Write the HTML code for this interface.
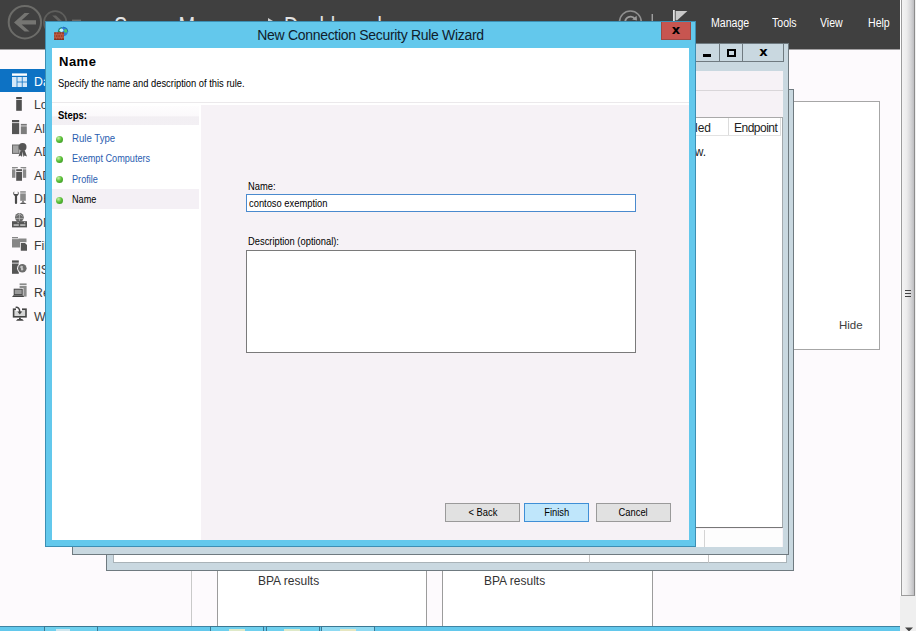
<!DOCTYPE html>
<html lang="en">
<head>
<meta charset="utf-8">
<title>New Connection Security Rule Wizard</title>
<style>
*{box-sizing:border-box;margin:0;padding:0}
html,body{width:916px;height:631px;overflow:hidden;background:#fdfafd;font-family:"Liberation Sans",sans-serif;color:#000}
.abs{position:absolute}
#stage{position:relative;width:916px;height:631px;overflow:hidden;background:#fdfafd}
/* Server Manager header */
#smhead{left:0;top:0;width:900px;height:49px;background:#404040;overflow:hidden}
.smt{font-size:28px;line-height:28px;color:#e2e2e2;white-space:nowrap;transform:translateY(0.6px) scaleX(0.715);transform-origin:0 50%}
.menu{top:16px;font-size:12px;line-height:14px;color:#fff;white-space:nowrap;transform:scaleX(0.88);transform-origin:0 50%}
/* sidebar */
.navrow{left:0;width:60px;height:23px;font-size:12.3px;line-height:23px;color:#3a3a3a;white-space:nowrap}
.navrow span{position:absolute;left:34px;top:2px;transform:translateY(0.3px)}
.navsel{background:#0d72c4;color:#fff}
/* windows */
.frame{background:#c9d8e0;border:1px solid #6f7a80}
.tile{background:#fff}
.vline{width:1px;background:#b4b4b4}
.bpa{font-size:12px;line-height:14px;color:#333;white-space:nowrap}
/* dialog */
#dlg{left:45px;top:21px;width:651px;height:526px;background:#63c8ec;border:1px solid #3c8fb4}
#dlgtitle{left:0;top:4px;width:649px;text-align:center;font-size:14px;line-height:18px;color:#10202c;white-space:nowrap;letter-spacing:-0.31px}
#dlgclose{left:615px;top:0;width:30px;height:18px;background:#c75550;border:1px solid #9c4a46;border-top:0;color:#000;text-align:center;font-family:'DejaVu Sans',sans-serif;font-size:13px;font-weight:bold;line-height:16px}
#inner{left:6px;top:26px;width:637px;height:492px;background:#fff;overflow:hidden}
.sx{display:inline-block;transform-origin:0 50%;white-space:nowrap}
.t11{font-size:11px;line-height:13px;white-space:nowrap}
.step{left:20px;color:#2a5db0}
.dot{left:3.5px;margin-top:0.5px;width:7.4px;height:7.4px;border-radius:50%;background:radial-gradient(circle at 35% 30%,#c9f0a8 0%,#5cc03a 45%,#2f8a1c 100%)}
.btn{top:455px;height:19px;border:1px solid #9a9a9a;background:#e1e1e1;text-align:center;font-size:11px;line-height:17px}
</style>
</head>
<body>
<div id="stage">

<!-- Server Manager header -->
<div id="smhead" class="abs">
  <svg class="abs" style="left:0;top:0" width="110" height="49" viewBox="0 0 110 49">
    <circle cx="24.9" cy="22.2" r="16.2" fill="none" stroke="#6c6c69" stroke-width="2"/>
    <path d="M14 22.4 L24.6 13 H29.6 L21.6 20.2 H36 V24.6 H21.6 L29.6 31.6 H24.6 Z" fill="#757572"/>
    <circle cx="55.2" cy="22.5" r="11.3" fill="none" stroke="#5e5e5c" stroke-width="1.7"/>
    <path d="M63.5 22.5 L56 15.6 H52.2 L58 20.9 H47 V24.1 H58 L52.2 29.4 H56 Z" fill="#636361"/>
    <rect x="72" y="19.6" width="9" height="2" fill="#6a6a68"/>
  </svg>
  <div class="abs smt" style="left:114px;top:12px">Server Manager</div>
  <div class="abs" style="left:268px;top:18px;width:0;height:0;border-left:5px solid #cfcfcf;border-top:3.5px solid transparent;border-bottom:3.5px solid transparent"></div>
  <div class="abs smt" style="left:284px;top:12px">Dashboard</div>
  <svg class="abs" style="left:600px;top:0" width="120" height="49" viewBox="0 0 120 49">
    <circle cx="30.4" cy="22" r="10.9" fill="none" stroke="#8f8f8f" stroke-width="1.5"/>
    <path d="M25.2 21.5 A5.4 5.4 0 0 1 35 19" fill="none" stroke="#9a9a9a" stroke-width="1.9"/>
    <path d="M32.2 19.6 L37 20.6 L36.6 15.8 Z" fill="#9a9a9a"/>
    <rect x="51.6" y="14" width="1.3" height="9" fill="#a8a8a8"/>
    <rect x="73" y="10" width="1.8" height="14" fill="#e0e0e0"/>
    <path d="M75.6 11 H87.4 L77.2 20.2 H75.6 Z" fill="#c9c9c9"/>
  </svg>
  <div class="abs menu" style="left:711px">Manage</div>
  <div class="abs menu" style="left:772px">Tools</div>
  <div class="abs menu" style="left:820px">View</div>
  <div class="abs menu" style="left:868px">Help</div>
</div>
<div class="abs" style="left:0;top:49px;width:900px;height:1px;background:#a3a1a3"></div>

<!-- right scrollbar -->
<div class="abs" style="left:900px;top:0;width:16px;height:631px;background:#efefef"></div>
<div class="abs" style="left:900px;top:0;width:1px;height:596px;background:#fff"></div>
<div class="abs" style="left:901px;top:0;width:14px;height:596px;background:linear-gradient(90deg,#f4f4f4 0%,#ececec 40%,#d4d4d6 75%,#bdbdc0 100%);border-left:1px solid #9c9c9c;border-right:1px solid #8c8c8c;border-bottom:1px solid #9c9c9c"></div>
<div class="abs" style="left:905px;top:290px;width:6px;height:1px;background:#444"></div>
<div class="abs" style="left:905px;top:293px;width:6px;height:1px;background:#444"></div>
<div class="abs" style="left:905px;top:296px;width:6px;height:1px;background:#444"></div>
<svg class="abs" style="left:904px;top:627px" width="10" height="4" viewBox="0 0 10 4"><path d="M1 0.5 H9 L5 4.5 Z" fill="#444"/></svg>

<!-- sidebar -->
<div class="abs navrow navsel" style="top:69px"><span>Dashboard</span></div>
<div class="abs navrow" style="top:92px"><span>Local Server</span></div>
<div class="abs navrow" style="top:116px"><span>All Servers</span></div>
<div class="abs navrow" style="top:139px"><span>AD CS</span></div>
<div class="abs navrow" style="top:163px"><span>AD DS</span></div>
<div class="abs navrow" style="top:186px"><span>DHCP</span></div>
<div class="abs navrow" style="top:210px"><span>DNS</span></div>
<div class="abs navrow" style="top:233px"><span>File and Storage Services</span></div>
<div class="abs navrow" style="top:257px"><span>IIS</span></div>
<div class="abs navrow" style="top:280px"><span>Remote Access</span></div>
<div class="abs navrow" style="top:304px"><span>WSUS</span></div>
<svg class="abs" style="left:0;top:60px" width="45" height="280" viewBox="0 60 45 280">
<!-- dashboard -->
<rect x="12" y="73.4" width="15" height="2.4" fill="#fff"/>
<rect x="12" y="77" width="4.6" height="10" fill="#d4e8f9"/>
<rect x="17.4" y="77" width="4.4" height="4.6" fill="#d4e8f9"/><rect x="22.6" y="77" width="4.4" height="4.6" fill="#d4e8f9"/>
<rect x="17.4" y="82.4" width="4.4" height="4.6" fill="#d4e8f9"/><rect x="22.6" y="82.4" width="4.4" height="4.6" fill="#d4e8f9"/>
<!-- local server -->
<rect x="16.2" y="97" width="5.6" height="2" fill="#4a4a4a"/><rect x="16.2" y="99.8" width="5.6" height="11" fill="#4f4f4f"/>
<!-- all servers -->
<rect x="12" y="120" width="7.2" height="2.3" fill="#505050"/><rect x="12" y="123.1" width="7.2" height="11" fill="#555"/>
<rect x="20.8" y="123.9" width="6" height="1.7" fill="#777"/><rect x="20.8" y="126.3" width="6" height="7.8" fill="#7d7d7d"/>
<!-- AD CS -->
<rect x="12.5" y="145" width="6.5" height="8.4" fill="#a4a4a4" stroke="#6a6a6a" stroke-width="1"/>
<path d="M20.6 150.5 L18.4 156.6 L20.8 155.4 L22 157 L22.7 151.5 L23.4 157 L24.6 155.4 L27 156.6 L24.8 150.5 Z" fill="#555"/>
<circle cx="22.6" cy="147" r="3.9" fill="#555"/>
<!-- AD DS -->
<rect x="12" y="167" width="5.8" height="1.5" fill="#8a8a8a"/><rect x="12" y="169.3" width="5.8" height="8.5" fill="#8a8a8a"/>
<rect x="20.6" y="167" width="5.6" height="1.5" fill="#8a8a8a"/><rect x="20.6" y="169.3" width="5.6" height="8.5" fill="#8a8a8a"/>
<rect x="15.4" y="168.4" width="7.4" height="13" fill="#fdfafd"/>
<rect x="16.2" y="169.2" width="5.8" height="2" fill="#555"/><rect x="16.2" y="172" width="5.8" height="8.8" fill="#555"/>
<!-- DHCP -->
<path d="M14.2 191.2 A2.9 2.9 0 0 0 14.9 196 V203 A1.1 1.1 0 0 0 17.1 203 V196 A2.9 2.9 0 0 0 17.8 191.2 V194 H14.2 Z" fill="#4a4a4a"/>
<rect x="20.2" y="191.2" width="5.6" height="1.5" fill="#8a8a8a"/><rect x="20.2" y="193.4" width="5.6" height="7.4" fill="#8a8a8a"/>
<rect x="22.3" y="200.8" width="1.4" height="1.8" fill="#555"/><path d="M19.6 204 L21.6 202.5 H24.4 L26.6 204 Z" fill="#555"/>
<!-- DNS -->
<circle cx="19.4" cy="217.3" r="4.4" fill="#6a6a6a"/>
<path d="M16.2 216.5 Q19.4 212 22.6 216.5 M19.4 213 V221 M15.2 218.4 H23.6" stroke="#b8b8b8" stroke-width="0.8" fill="none"/>
<rect x="12" y="221.2" width="15" height="6.2" fill="#555"/>
<rect x="13.6" y="224.3" width="5.2" height="1.5" fill="#c8c8c8"/><rect x="20.2" y="224.3" width="5.2" height="1.5" fill="#c8c8c8"/>
<rect x="17.6" y="222.2" width="1" height="1" fill="#ddd"/><rect x="24.2" y="222.2" width="1" height="1" fill="#ddd"/>
<!-- File -->
<path d="M12 237 H18 V238.6 H26.5 V247.6 H12 Z" fill="#868686"/>
<rect x="12" y="238.4" width="6.5" height="0.7" fill="#fdfafd"/>
<rect x="20" y="242.2" width="7.8" height="9.4" fill="#fdfafd"/>
<path d="M20.8 243 H25 L27 245 V250.8 H20.8 Z" fill="#555"/>
<!-- IIS -->
<rect x="12" y="260.4" width="6.8" height="2.3" fill="#505050"/><rect x="12" y="263.5" width="6.8" height="10.3" fill="#555"/>
<circle cx="22.3" cy="268.3" r="5.2" fill="#fdfafd"/><circle cx="22.3" cy="268.3" r="4.3" fill="#6c6c6c"/>
<path d="M20 267 Q21.5 265 23 266.5 Q22 268 23.5 269 Q22.5 271.5 21 270 Q21.5 268.5 20 267 Z" fill="#c4c4c4"/>
<!-- Remote Access -->
<rect x="19.6" y="283.4" width="7" height="1.8" fill="#8a8a8a"/><rect x="19.6" y="286" width="7" height="10.6" fill="#8c8c8c"/>
<rect x="13" y="288" width="10.4" height="8" fill="#fdfafd"/>
<rect x="14.2" y="289.2" width="8" height="5.4" fill="#9a9a9a" stroke="#444" stroke-width="1"/>
<path d="M12 297 L13.4 295.3 H23 L24.2 297 Z" fill="#444"/>
<!-- WSUS -->
<rect x="13.6" y="309.2" width="12.4" height="7.6" fill="#d6d6d6" stroke="#444" stroke-width="1.6"/>
<rect x="16" y="307" width="6" height="4" fill="#fdfafd"/>
<path d="M15.6 307.4 Q19.6 307 19.8 312" stroke="#444" stroke-width="1.5" fill="none"/>
<path d="M17.4 311.6 H22.2 L19.8 314.6 Z" fill="#444"/>
<rect x="19" y="317.6" width="1.8" height="1.6" fill="#444"/><path d="M16 320.7 L17.6 319 H22.2 L23.8 320.7 Z" fill="#444"/>
</svg>

<!-- dashboard tiles behind -->
<div class="abs vline" style="left:191px;top:560px;height:66px;background:#c9c9c9"></div>
<div class="abs tile" style="left:217px;top:560px;width:210px;height:66px;border-left:1px solid #9c9c9c;border-right:1px solid #9c9c9c"></div>
<div class="abs tile" style="left:442px;top:560px;width:211px;height:66px;border-left:1px solid #9c9c9c;border-right:1px solid #9c9c9c"></div>
<div class="abs bpa" style="left:258px;top:574px">BPA results</div>
<div class="abs bpa" style="left:484px;top:574px">BPA results</div>
<!-- right white panel with Hide -->
<div class="abs tile" style="left:790px;top:101px;width:90px;height:249px;border:1px solid #a6a6a6"></div>
<div class="abs" style="left:839px;top:318px;font-size:11.5px;line-height:14px;color:#404040">Hide</div>

<!-- third window (rear) -->
<div class="abs frame" style="left:106px;top:89px;width:688px;height:482px"></div>
<div class="abs" style="left:113px;top:555px;width:674px;height:8px;background:#fff;border:1px solid #a9b3b8;border-top:0"></div>
<div class="abs" style="left:589px;top:555px;width:1px;height:8px;background:#c4c4c4"></div>
<div class="abs" style="left:708px;top:555px;width:1px;height:8px;background:#c4c4c4"></div>

<!-- second window (MMC) -->
<div class="abs frame" style="left:72px;top:43px;width:717px;height:512px"></div>
<div class="abs" style="left:696px;top:44px;width:24px;height:18px;border-right:1px solid #6f7a80;border-bottom:1px solid #6f7a80"></div>
<div class="abs" style="left:720px;top:44px;width:23px;height:18px;border-right:1px solid #6f7a80;border-bottom:1px solid #6f7a80"></div>
<div class="abs" style="left:743px;top:44px;width:41px;height:18px;border-right:1px solid #6f7a80;border-bottom:1px solid #6f7a80"></div>
<div class="abs" style="left:703px;top:54px;width:8px;height:3px;background:#000"></div>
<div class="abs" style="left:727px;top:49px;width:9px;height:8px;border:2px solid #000"></div>
<div class="abs" style="left:743px;top:44px;width:41px;height:18px;text-align:center;font-family:'DejaVu Sans',sans-serif;font-size:13px;font-weight:bold;line-height:16px;color:#000">x</div>
<div class="abs" style="left:80px;top:71px;width:703px;height:476px;background:#f6f2f6"></div>
<div class="abs" style="left:80px;top:90px;width:703px;height:1px;background:#d9d6d9"></div>
<!-- list header & list -->
<div class="abs" style="left:600px;top:117px;width:183px;height:411px;background:#fff;border-bottom:1px solid #777;border-top:1px solid #a9a9a9;border-right:1px solid #a3a9ad"></div>
<div class="abs" style="left:600px;top:118px;width:181px;height:18px;border-bottom:1px solid #e2e2e2"></div>
<div class="abs" style="left:728px;top:118px;width:1px;height:17px;background:#dcdcdc"></div>
<div class="abs" style="left:780px;top:118px;width:1px;height:17px;background:#dcdcdc"></div>
<div class="abs" style="left:611px;top:121px;width:100px;text-align:right;font-size:12px;line-height:14px;color:#222;white-space:nowrap">Enabled</div>
<div class="abs" style="left:734px;top:121px;font-size:12px;line-height:14px;color:#222;white-space:nowrap;letter-spacing:-0.5px">Endpoint</div>
<div class="abs" style="left:406px;top:145px;width:300px;text-align:right;font-size:12px;line-height:14px;color:#222;white-space:nowrap">There are no items to show in this view.</div>
<div class="abs" style="left:600px;top:529px;width:182px;height:18px;background:#fdfdfd"></div>
<div class="abs" style="left:704px;top:530px;width:1px;height:17px;background:#d4d4d4"></div>

<!-- taskbar -->
<div class="abs" style="left:0;top:626px;width:900px;height:5px;background:#63c8ec;border-top:1px solid #3f84a4"></div>
<div class="abs" style="left:44px;top:626px;width:54px;height:5px;background:#6fd0ee;border:1px solid #3b7893;border-bottom:0"></div>
<div class="abs" style="left:210px;top:626px;width:54px;height:5px;background:#6fd0ee;border:1px solid #3b7893;border-bottom:0"></div>
<div class="abs" style="left:266px;top:626px;width:54px;height:5px;background:#6fd0ee;border:1px solid #3b7893;border-bottom:0"></div>
<div class="abs" style="left:321px;top:626px;width:54px;height:5px;background:#8fdaf2;border:1px solid #3b7893;border-bottom:0"></div>
<div class="abs" style="left:56px;top:629px;width:14px;height:2px;background:#cfe6ee"></div>
<div class="abs" style="left:229px;top:629px;width:16px;height:2px;background:#dfe9c8"></div>
<div class="abs" style="left:284px;top:629px;width:16px;height:2px;background:#dfe9c8"></div>
<div class="abs" style="left:340px;top:629px;width:16px;height:2px;background:#e6e6c0"></div>

<!-- active dialog -->
<div id="dlg" class="abs">
  <svg class="abs" style="left:6px;top:3px" width="20" height="18" viewBox="52 25 20 18">
    <ellipse cx="62.9" cy="31.6" rx="5.1" ry="4.7" fill="#2f7fd6"/>
    <path d="M58 32 Q58.4 28 62 27.2 Q60.5 29.5 61 32.5 Z" fill="#1f8f55"/>
    <ellipse cx="61.4" cy="30.2" rx="1.9" ry="1.7" fill="#bff3ff"/>
    <ellipse cx="65.8" cy="30.8" rx="1.7" ry="1.9" fill="#4ccb63"/>
    <path d="M63 27 Q67.5 27.4 68 31.5" fill="none" stroke="#1c63b0" stroke-width="0.8"/>
    <rect x="54.1" y="32.2" width="9.9" height="7.7" fill="#9c3d27"/>
    <path d="M54.1 34.7 H64 M54.1 37.3 H64 M56.6 32.2 V34.7 M59.1 32.2 V34.7 M61.6 32.2 V34.7 M55.4 34.7 V37.3 M57.9 34.7 V37.3 M60.4 34.7 V37.3 M62.9 34.7 V37.3 M56.6 37.3 V39.9 M59.1 37.3 V39.9 M61.6 37.3 V39.9" stroke="#d0735a" stroke-width="0.55"/>
    <rect x="54.1" y="39.3" width="9.9" height="0.6" fill="#6e2415"/>
  </svg>
  <div id="dlgtitle" class="abs"><span id="tt">New Connection Security Rule Wizard</span></div>
  <div id="dlgclose" class="abs">x</div>
  <div id="inner" class="abs">
    <div class="abs" style="left:7px;top:6px;font-size:13px;line-height:16px;font-weight:bold;letter-spacing:0.5px;color:#000;white-space:nowrap">Name</div>
    <div class="abs t11" style="left:6px;top:29px"><span class="sx" style="transform:scaleX(0.85)">Specify the name and description of this rule.</span></div>
    <div class="abs" style="left:0;top:54px;width:637px;height:1px;background:#ebe9eb"></div>
    <!-- steps column -->
    <div class="abs" style="left:0;top:58px;width:147px;height:19px;background:linear-gradient(180deg,#fefdfe 0%,#fbf9fb 50%,#f2eff3 58%,#f3f0f4 100%)"></div>
    <div class="abs t11" style="left:6px;top:61px;font-weight:bold"><span class="sx" style="transform:scaleX(0.86)">Steps:</span></div>
    <div class="abs" style="left:0;top:141px;width:147px;height:20px;background:#f4f0f5"></div>
    <div class="abs dot" style="top:87px"></div>
    <div class="abs dot" style="top:107px"></div>
    <div class="abs dot" style="top:127px"></div>
    <div class="abs dot" style="top:148px"></div>
    <div class="abs t11 step" style="top:84px"><span class="sx" style="transform:scaleX(0.875)">Rule Type</span></div>
    <div class="abs t11 step" style="top:104px"><span class="sx" style="transform:scaleX(0.83)">Exempt Computers</span></div>
    <div class="abs t11 step" style="top:125px"><span class="sx" style="transform:scaleX(0.83)">Profile</span></div>
    <div class="abs t11 step" style="top:145px;color:#000"><span class="sx" style="transform:scaleX(0.83)">Name</span></div>
    <!-- right pane -->
    <div class="abs" style="left:149px;top:57px;width:488px;height:435px;background:#f6f2f6"></div>
    <div class="abs t11" style="left:196px;top:132px"><span class="sx" style="transform:scaleX(0.85)">Name:</span></div>
    <div class="abs" style="left:194px;top:146px;width:390px;height:18px;background:#fff;border:1px solid #4a8ace"></div>
    <div class="abs t11" style="left:197px;top:149px"><span class="sx" style="transform:scaleX(0.85)">contoso exemption</span></div>
    <div class="abs t11" style="left:196px;top:187px"><span class="sx" style="transform:scaleX(0.85)">Description (optional):</span></div>
    <div class="abs" style="left:194px;top:202px;width:390px;height:103px;background:#fff;border:1px solid #7a7a7a"></div>
    <!-- buttons -->
    <div class="abs btn" style="left:393px;width:75px"><span class="sx" style="transform:scaleX(0.85);transform-origin:50% 50%">&lt; Back</span></div>
    <div class="abs btn" style="left:472px;width:65px;background:#bfe6fb;border-color:#3f8fd6"><span class="sx" style="transform:scaleX(0.85);transform-origin:50% 50%">Finish</span></div>
    <div class="abs btn" style="left:544px;width:75px"><span class="sx" style="transform:scaleX(0.85);transform-origin:50% 50%">Cancel</span></div>
  </div>
</div>

</div>
</body>
</html>
